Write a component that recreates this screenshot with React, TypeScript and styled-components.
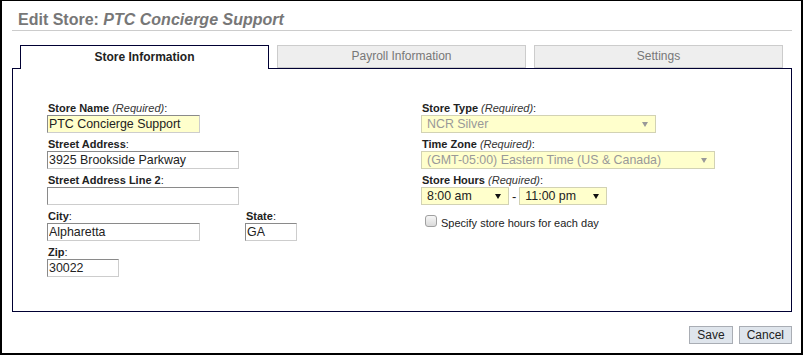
import styled, { createGlobalStyle } from "styled-components";

const GlobalStyle = createGlobalStyle`
  body {
    margin: 0;
    background: #fff;
    font-family: "Liberation Sans", Arial, sans-serif;
  }
`;

const Frame = styled.div`
  box-sizing: border-box;
  width: 803px;
  height: 355px;
  border: 2px solid #000;
  border-top-width: 1px;
  padding: 9px 9px 0 10px;
`;

const Title = styled.h1`
  margin: 0;
  padding: 0 6px;
  height: 20px;
  line-height: 20px;
  font-size: 16px;
  font-weight: bold;
  color: #777;
  border-bottom: 1px solid #ccc;
  em {
    font-style: italic;
  }
`;

const TabBar = styled.div`
  display: flex;
  gap: 8px;
  height: 23px;
  margin-top: 14px;
  padding-left: 8px;
`;

const Tab = styled.div<{ $active?: boolean }>`
  position: relative;
  z-index: ${(p) => (p.$active ? 1 : 0)};
  box-sizing: border-box;
  width: 249px;
  height: ${(p) => (p.$active ? 24 : 23)}px;
  border: 1px solid ${(p) => (p.$active ? "#000033" : "#ccc")};
  border-bottom: ${(p) => (p.$active ? "none" : "1px solid #ccc")};
  background: ${(p) => (p.$active ? "#fff" : "#eee")};
  text-align: center;
  font-size: 12px;
  line-height: ${(p) => (p.$active ? 22 : 21)}px;
  font-weight: ${(p) => (p.$active ? "bold" : "normal")};
  color: ${(p) => (p.$active ? "#222" : "#777")};
`;

const Panel = styled.div`
  box-sizing: border-box;
  height: 244px;
  border: 1px solid #000033;
  padding: 33px 0 0 34px;
  display: grid;
  grid-template-columns: 374px 1fr;
  align-items: start;
`;

const Column = styled.div`
  display: flex;
  flex-direction: column;
`;

const Field = styled.div<{ $w?: number }>`
  margin-bottom: 5px;
  width: ${(p) => (p.$w ? `${p.$w}px` : "auto")};
`;

const FieldRow = styled.div`
  display: flex;
`;

const Label = styled.label`
  display: block;
  height: 13px;
  padding-left: 1px;
  font-size: 11px;
  line-height: 13px;
  font-weight: bold;
  color: #222;
  white-space: nowrap;
  i {
    font-weight: normal;
    color: #333;
  }
  span {
    font-weight: normal;
  }
`;

const TextInput = styled.input<{ $w: number; $required?: boolean }>`
  box-sizing: border-box;
  display: block;
  width: ${(p) => p.$w}px;
  height: 18px;
  margin: 0;
  padding: 0 1px;
  border: 1px solid;
  border-color: #8a8a8a #cdcdcd #cdcdcd #8a8a8a;
  background: ${(p) => (p.$required ? "#ffffcc" : "#fff")};
  font: 12.4px "Liberation Sans", Arial, sans-serif;
  color: #222;
  outline: none;
`;

const SelectBox = styled.div<{ $w: number; $disabled?: boolean }>`
  box-sizing: border-box;
  width: ${(p) => p.$w}px;
  height: 18px;
  display: flex;
  align-items: center;
  justify-content: space-between;
  padding: 0 7px 0 5px;
  background: #ffffcc;
  border: 1px solid #d2d2b4;
  font-size: 12.4px;
  color: ${(p) => (p.$disabled ? "#999" : "#222")};
  white-space: nowrap;
`;

const HoursRow = styled.div`
  display: flex;
  align-items: center;
`;

const Dash = styled.span`
  margin: 0 3px;
  font-size: 13px;
  color: #222;
`;

const CheckRow = styled.label`
  display: flex;
  align-items: flex-start;
  gap: 4px;
  margin-top: 5px;
  padding-left: 4px;
  font-size: 11px;
  line-height: 13px;
  color: #222;
`;

const CheckBox = styled.input`
  appearance: none;
  box-sizing: border-box;
  width: 12px;
  height: 12px;
  margin: 0;
  border: 1px solid #a0a0a0;
  border-radius: 3px;
  background: linear-gradient(#f6f6f6, #dadada);
`;

const CheckText = styled.span`
  margin-top: 2px;
`;

const Footer = styled.div`
  display: flex;
  justify-content: flex-end;
  gap: 6px;
  margin-top: 14px;
`;

const Button = styled.button`
  box-sizing: border-box;
  height: 18px;
  margin: 0;
  padding: 0 7px;
  border: 1px solid #a9adb4;
  background: #dfe5ec;
  font: 12px "Liberation Sans", Arial, sans-serif;
  color: #222;
`;

const Arrow = ({ color }: { color: string }) => (
  <svg width="6" height="5" viewBox="0 0 6 5">
    <path d="M0 0h6L3 5z" fill={color} />
  </svg>
);

const Select = ({ value, w, disabled }: { value: string; w: number; disabled?: boolean }) => (
  <SelectBox $w={w} $disabled={disabled}>
    <span>{value}</span>
    <Arrow color={disabled ? "#999" : "#111"} />
  </SelectBox>
);

const Req = () => (
  <>
    {" "}
    <i>(Required)</i>
    <span>:</span>
  </>
);

export default function App() {
  return (
    <>
      <GlobalStyle />
      <Frame>
        <Title>
          Edit Store: <em>PTC Concierge Support</em>
        </Title>
        <TabBar>
          <Tab $active>Store Information</Tab>
          <Tab>Payroll Information</Tab>
          <Tab>Settings</Tab>
        </TabBar>
        <Panel>
          <Column>
            <Field>
              <Label>
                Store Name
                <Req />
              </Label>
              <TextInput $w={153} $required defaultValue="PTC Concierge Support" />
            </Field>
            <Field>
              <Label>
                Street Address<span>:</span>
              </Label>
              <TextInput $w={192} defaultValue="3925 Brookside Parkway" />
            </Field>
            <Field>
              <Label>
                Street Address Line 2<span>:</span>
              </Label>
              <TextInput $w={192} defaultValue="" />
            </Field>
            <FieldRow>
              <Field $w={198}>
                <Label>
                  City<span>:</span>
                </Label>
                <TextInput $w={153} defaultValue="Alpharetta" />
              </Field>
              <Field>
                <Label>
                  State<span>:</span>
                </Label>
                <TextInput $w={52} defaultValue="GA" />
              </Field>
            </FieldRow>
            <Field>
              <Label>
                Zip<span>:</span>
              </Label>
              <TextInput $w={72} defaultValue="30022" />
            </Field>
          </Column>
          <Column>
            <Field>
              <Label>
                Store Type
                <Req />
              </Label>
              <Select w={235} value="NCR Silver" disabled />
            </Field>
            <Field>
              <Label>
                Time Zone
                <Req />
              </Label>
              <Select w={294} value="(GMT-05:00) Eastern Time (US & Canada)" disabled />
            </Field>
            <Field>
              <Label>
                Store Hours
                <Req />
              </Label>
              <HoursRow>
                <Select w={88} value="8:00 am" />
                <Dash>-</Dash>
                <Select w={88} value="11:00 pm" />
              </HoursRow>
            </Field>
            <CheckRow>
              <CheckBox type="checkbox" />
              <CheckText>Specify store hours for each day</CheckText>
            </CheckRow>
          </Column>
        </Panel>
        <Footer>
          <Button>Save</Button>
          <Button>Cancel</Button>
        </Footer>
      </Frame>
    </>
  );
}
